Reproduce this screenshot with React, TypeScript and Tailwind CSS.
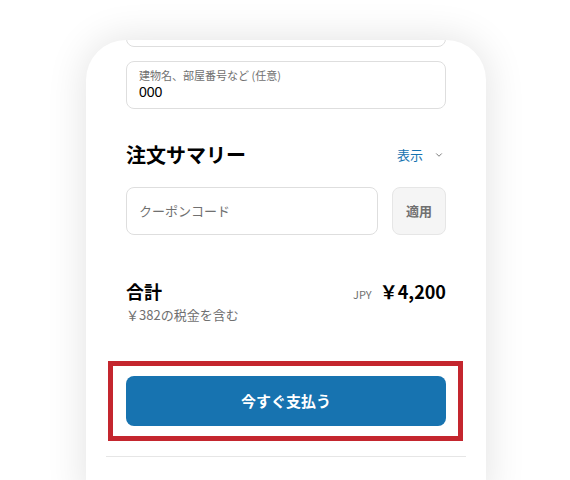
import { ChevronDown } from "lucide-react";

const font = { fontFamily: '"Noto Sans CJK JP", Roboto, sans-serif' };

export default function App() {
  return (
    <div className="min-h-[480px] bg-white pt-[40px] overflow-hidden" style={font}>
      <div className="ml-[86px] w-[400px] h-[460px] rounded-t-[40px] bg-white overflow-hidden shadow-[0_0_40px_rgba(0,0,0,0.12)] px-10">
        {/* clipped field above */}
        <div className="-mt-[41px] h-[48px] rounded-lg border border-[#dedede]" />

        {/* address line 2 */}
        <div className="mt-[14px] h-[48px] rounded-lg border border-[#dedede] px-[12px] pt-[5px] flex flex-col">
          <span className="text-[11px] leading-[16px] text-[#707070]">建物名、部屋番号など (任意)</span>
          <span className="text-[14px] leading-[18px] text-black" style={{ fontFamily: '"Liberation Sans", sans-serif' }}>000</span>
        </div>

        {/* summary header */}
        <div className="mt-[32px] h-[28px] flex items-center justify-between">
          <h2 className="text-[20px] font-bold text-black">注文サマリー</h2>
          <button className="flex items-center gap-[11px] text-[13px] text-[#1773b0]">
            表示
            <ChevronDown className="w-[10px] h-[10px] text-[#707070] mr-[2px]" strokeWidth={2.2} />
          </button>
        </div>

        {/* coupon */}
        <div className="mt-[18px] flex gap-[14px]">
          <div className="flex-1 h-[48px] rounded-lg border border-[#dedede] px-[12px] flex items-center">
            <span className="text-[13px] text-[#707070]">クーポンコード</span>
          </div>
          <button className="w-[54px] h-[48px] rounded-lg border border-[#e6e6e6] bg-[#f5f5f5] text-[13px] font-bold text-[#707070]">
            適用
          </button>
        </div>

        {/* total */}
        <div className="mt-[44px] flex items-start justify-between">
          <div className="flex flex-col">
            <span className="text-[18px] leading-[24px] font-bold text-black">合計</span>
            <span className="mt-[2px] text-[13px] leading-[20px] text-[#707070]">￥382の税金を含む</span>
          </div>
          <div className="flex items-baseline gap-[8px] leading-[24px]">
            <span className="text-[11px] text-[#707070]">JPY</span>
            <span className="text-[18px] font-bold text-black">￥4,200</span>
          </div>
        </div>

        {/* pay button */}
        <div className="relative mt-[51px]">
          <button className="w-full h-[50px] rounded-lg bg-[#1773b0] text-[15px] font-bold text-white">
            今すぐ支払う
          </button>
          <div className="pointer-events-none absolute -left-[18px] -right-[17px] -top-[15px] -bottom-[15px] border-[5px] border-[#c4262e]" />
        </div>

        <div className="mt-[30px] -mx-5 h-px bg-[#e6e6e6]" />
      </div>
    </div>
  );
}
